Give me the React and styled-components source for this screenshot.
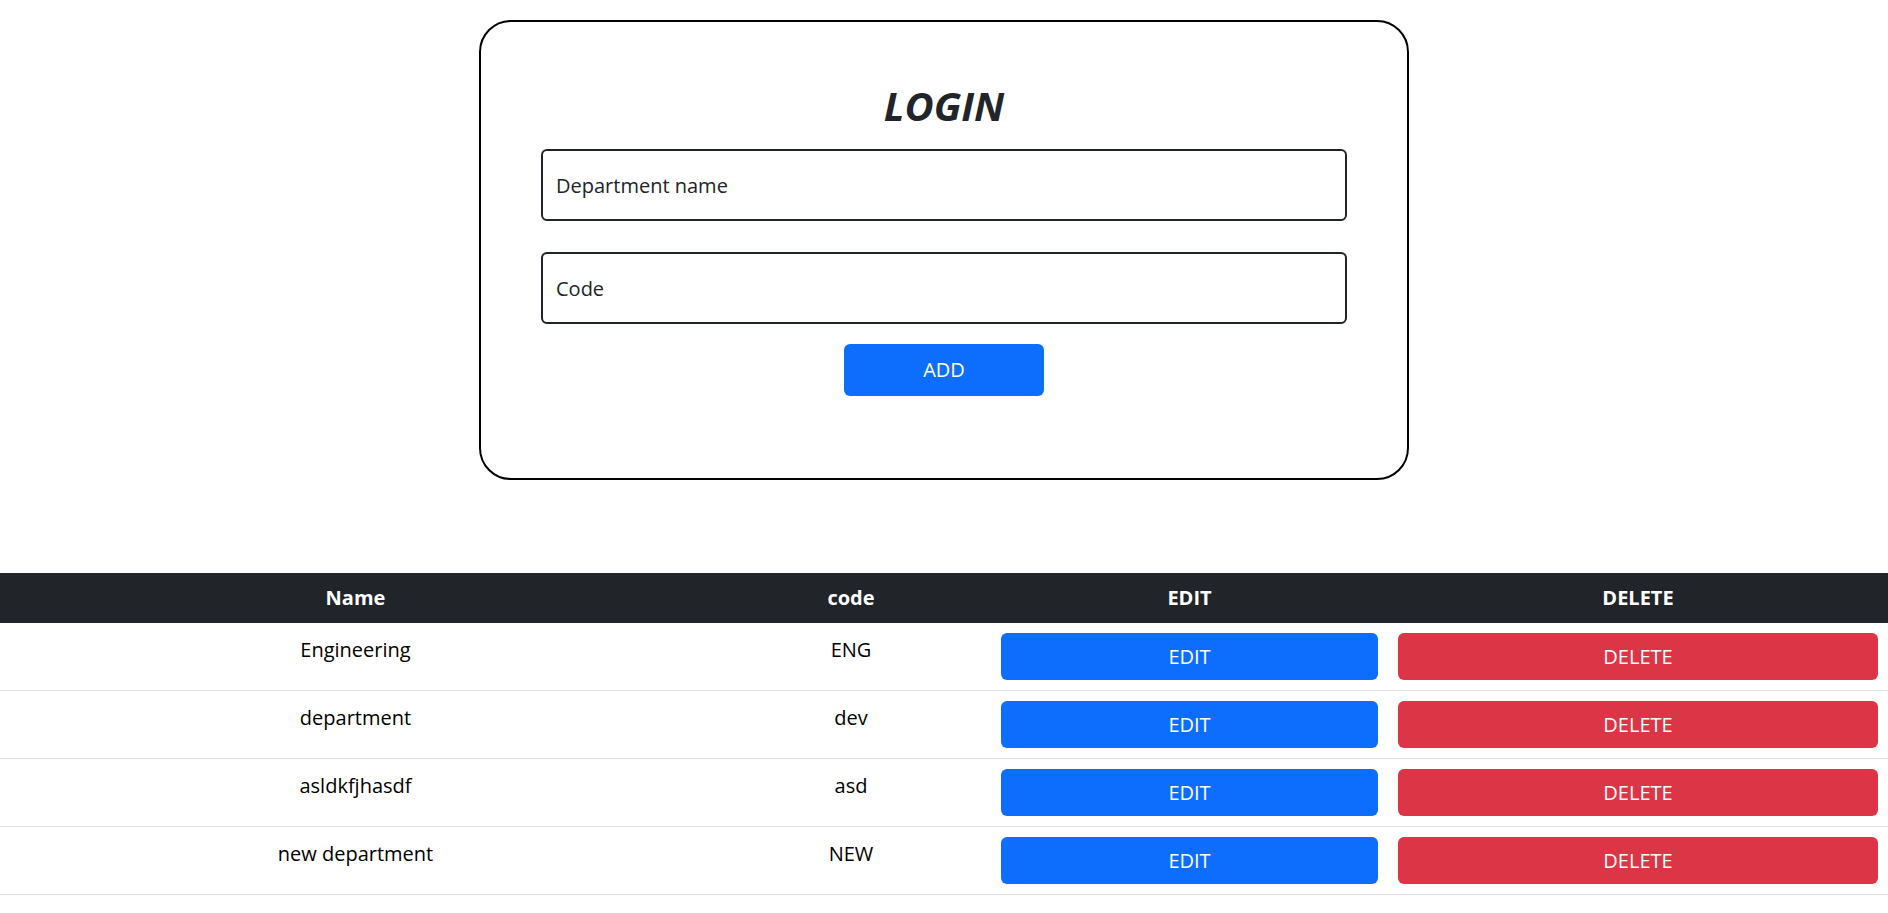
import React from 'react';
import styled, { createGlobalStyle } from 'styled-components';

const GlobalStyle = createGlobalStyle`
  body {
    margin: 0;
    font-family: "Open Sans", "Liberation Sans", sans-serif;
    font-size: 20px;
    line-height: 1.5;
    color: #212529;
    background: #fff;
  }
  * {
    box-sizing: border-box;
  }
`;

const Card = styled.form`
  width: 930px;
  margin: 20px auto 0;
  padding: 60px 60px 82px;
  border: 2px solid #000;
  border-radius: 32px;
  display: flex;
  flex-direction: column;
  align-items: center;
`;

const Title = styled.h1`
  margin: 0 0 19px;
  font-size: 40px;
  line-height: 48px;
  font-style: italic;
  font-weight: 700;
  color: #212529;
`;

const Field = styled.input`
  width: 100%;
  height: 72px;
  margin-bottom: ${props => props.$gap}px;
  padding: 0 13px;
  border: 2px solid #212529;
  border-radius: 6px;
  font: inherit;
  font-size: 20px;
  color: #212529;

  &::placeholder {
    color: #212529;
  }
`;

const Button = styled.button`
  display: block;
  width: ${props => props.$width || '100%'};
  height: ${props => props.$height || '47px'};
  border: 0;
  border-radius: 6px;
  font: inherit;
  font-size: 20px;
  color: #fff;
  background: ${props => (props.$danger ? '#dc3545' : '#0d6efd')};
  cursor: pointer;
`;

const Table = styled.table`
  width: 100%;
  margin-top: 93px;
  border-collapse: collapse;
  table-layout: fixed;
`;

const HeadCell = styled.th`
  width: ${props => props.$width}px;
  padding: 10px;
  font-weight: 700;
  line-height: 30px;
  color: #fff;
  background: #212529;
  text-align: center;
`;

const Row = styled.tr`
  border-bottom: 1px solid #dee2e6;
`;

const Cell = styled.td`
  padding: ${props => (props.$text ? '12px 10px 8px' : '10px')};
  line-height: 30px;
  text-align: center;
  vertical-align: top;
  color: #000;
`;

const departments = [
  { name: 'Engineering', code: 'ENG' },
  { name: 'department', code: 'dev' },
  { name: 'asldkfjhasdf', code: 'asd' },
  { name: 'new department', code: 'NEW' },
];

export default function App() {
  return (
    <>
      <GlobalStyle />
      <Card onSubmit={e => e.preventDefault()}>
        <Title>LOGIN</Title>
        <Field placeholder="Department name" $gap={31} />
        <Field placeholder="Code" $gap={20} />
        <Button type="submit" $width="200px" $height="52px">
          ADD
        </Button>
      </Card>
      <Table>
        <thead>
          <tr>
            <HeadCell $width={711}>Name</HeadCell>
            <HeadCell $width={280}>code</HeadCell>
            <HeadCell $width={397}>EDIT</HeadCell>
            <HeadCell $width={500}>DELETE</HeadCell>
          </tr>
        </thead>
        <tbody>
          {departments.map(d => (
            <Row key={d.code}>
              <Cell $text>{d.name}</Cell>
              <Cell $text>{d.code}</Cell>
              <Cell>
                <Button type="button">EDIT</Button>
              </Cell>
              <Cell>
                <Button type="button" $danger>
                  DELETE
                </Button>
              </Cell>
            </Row>
          ))}
        </tbody>
      </Table>
    </>
  );
}
